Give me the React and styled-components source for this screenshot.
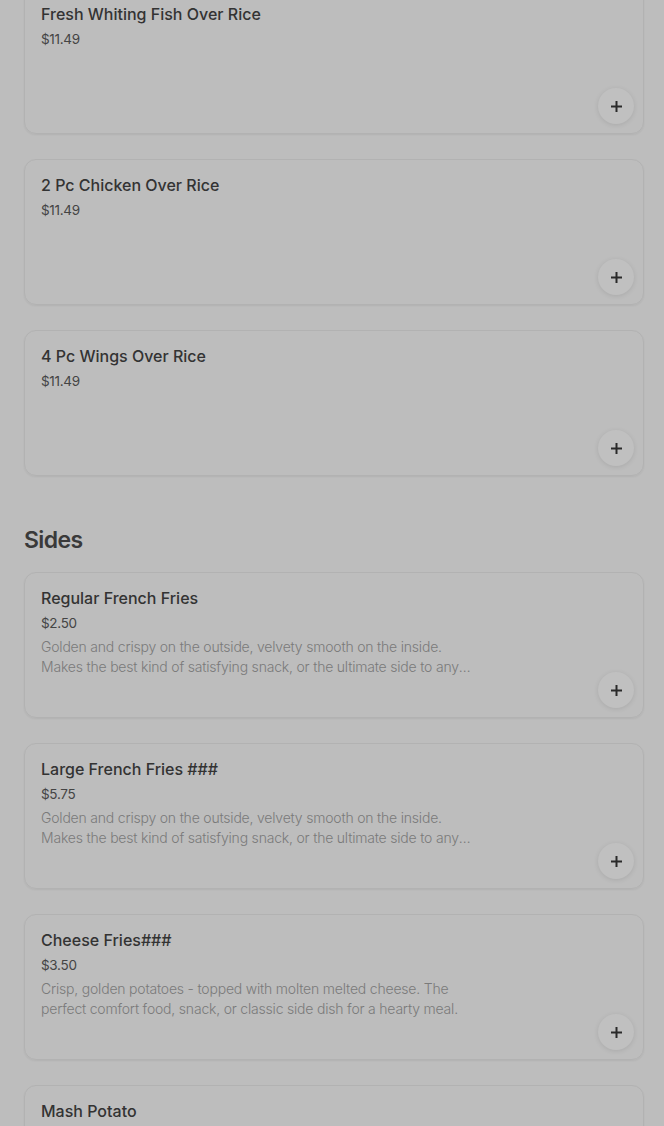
import styled, { createGlobalStyle } from "styled-components";

const GlobalStyle = createGlobalStyle`
  html, body {
    margin: 0;
    padding: 0;
    background: #bdbdbd;
    font-family: Inter, "Noto Sans", sans-serif;
    overflow: hidden;
  }
`;

const sections = [
  {
    name: null,
    items: [
      { name: "Fresh Whiting Fish Over Rice", price: "$11.49" },
      { name: "2 Pc Chicken Over Rice", price: "$11.49" },
      { name: "4 Pc Wings Over Rice", price: "$11.49" },
    ],
  },
  {
    name: "Sides",
    items: [
      {
        name: "Regular French Fries",
        price: "$2.50",
        desc: "Golden and crispy on the outside, velvety smooth on the inside. Makes the best kind of satisfying snack, or the ultimate side to any meal you can imagine.",
      },
      {
        name: "Large French Fries ###",
        price: "$5.75",
        desc: "Golden and crispy on the outside, velvety smooth on the inside. Makes the best kind of satisfying snack, or the ultimate side to any meal you can imagine.",
      },
      {
        name: "Cheese Fries###",
        price: "$3.50",
        desc: "Crisp, golden potatoes - topped with molten melted cheese. The perfect comfort food, snack, or classic side dish for a hearty meal.",
      },
      { name: "Mash Potato", price: "$3.50" },
    ],
  },
];

const Page = styled.div`
  margin-top: -12px;
  padding: 0 20px 0 24px;
  display: flex;
  flex-direction: column;
`;

const Section = styled.section`
  display: flex;
  flex-direction: column;
  gap: 25px;
  margin-bottom: 50px;
`;

const SectionTitle = styled.h2`
  margin: 0 0 -7px;
  font-size: 23px;
  line-height: 28px;
  font-weight: 600;
  color: #3a3a3a;
  letter-spacing: -0.6px;
`;

const Card = styled.div`
  position: relative;
  height: 146px;
  box-sizing: border-box;
  border: 1px solid #b2b2b2;
  border-radius: 12px;
  padding: 14px 16px;
  box-shadow: 0 1px 2px rgba(0, 0, 0, 0.06);
`;

const Name = styled.div`
  font-size: 16px;
  font-weight: 500;
  color: #333;
  line-height: 22px;
`;

const Price = styled.div`
  margin-top: 4px;
  font-size: 13.5px;
  letter-spacing: -0.3px;
  color: #444;
  line-height: 20px;
`;

const Desc = styled.p`
  margin: 4px 0 0;
  width: 436px;
  font-size: 14px;
  font-weight: 300;
  letter-spacing: -0.2px;
  line-height: 20px;
  color: #7a7a7a;
  display: -webkit-box;
  -webkit-line-clamp: 2;
  -webkit-box-orient: vertical;
  overflow: hidden;
`;

const AddButton = styled.button`
  position: absolute;
  right: 9px;
  bottom: 9px;
  width: 36px;
  height: 36px;
  border-radius: 50%;
  border: none;
  background: #c0c0c0;
  box-shadow: 0 1px 5px rgba(0, 0, 0, 0.1);
  display: flex;
  align-items: center;
  justify-content: center;
  padding: 0;
`;

const Plus = () => (
  <svg width="13" height="13" viewBox="0 0 13 13">
    <path d="M6.5 1v11M1 6.5h11" stroke="#2a2a2a" strokeWidth="2" />
  </svg>
);

export default function App() {
  return (
    <>
      <GlobalStyle />
      <Page>
        {sections.map((s, i) => (
          <Section key={i}>
            {s.name && <SectionTitle>{s.name}</SectionTitle>}
            {s.items.map((it) => (
              <Card key={it.name}>
                <Name>{it.name}</Name>
                <Price>{it.price}</Price>
                {it.desc && <Desc>{it.desc}</Desc>}
                <AddButton aria-label="add">
                  <Plus />
                </AddButton>
              </Card>
            ))}
          </Section>
        ))}
      </Page>
    </>
  );
}
